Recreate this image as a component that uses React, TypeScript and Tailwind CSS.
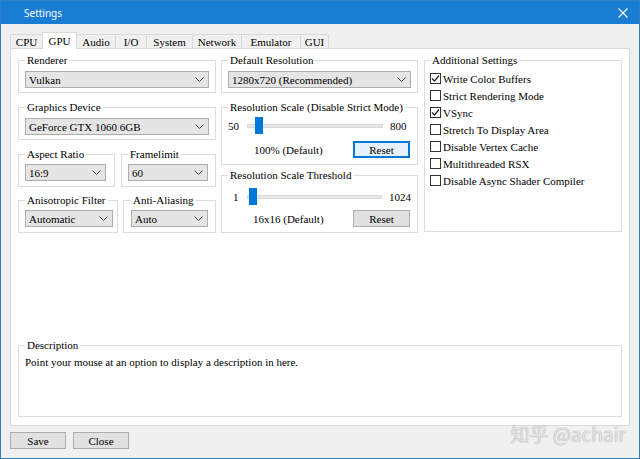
import React from "react";

const FONT = "font-['Liberation_Serif',serif] text-[11px] leading-[12px] text-black";

function Chevron() {
  return (
    <svg width="9" height="5" viewBox="0 0 9 5">
      <path d="M0.5 0.5 L4.5 4.5 L8.5 0.5" fill="none" stroke="#444" strokeWidth="1" />
    </svg>
  );
}

function Combo({ value, className = "" }: { value: string; className?: string }) {
  return (
    <div
      className={`h-[17px] bg-[#e5e5e5] border border-[#acacac] flex items-center justify-between pl-[3px] pr-[4px] ${className}`}
    >
      <span className="whitespace-nowrap">{value}</span>
      <Chevron />
    </div>
  );
}

function Group({
  title,
  className = "",
  children,
}: {
  title: string;
  className?: string;
  children?: React.ReactNode;
}) {
  return (
    <fieldset className={`border border-[#dcdcdc] min-w-0 ${className}`}>
      <legend className="px-[2px] leading-[12px] whitespace-nowrap">{title}</legend>
      {children}
    </fieldset>
  );
}

function Check({ label, checked }: { label: string; checked?: boolean }) {
  return (
    <div className="h-[17px] flex items-center gap-[2px]">
      <div className="w-[11px] h-[11px] border border-[#333] bg-white flex items-center justify-center">
        {checked && (
          <svg width="9" height="9" viewBox="0 0 9 9">
            <path d="M1 4.5 L3.5 7 L8 1.5" fill="none" stroke="#222" strokeWidth="1.2" />
          </svg>
        )}
      </div>
      <span className="whitespace-nowrap">{label}</span>
    </div>
  );
}

function Slider({
  left,
  right,
  handle,
  leftPad,
}: {
  left: string;
  right: string;
  handle: number;
  leftPad: string;
}) {
  return (
    <div className="h-[17px] flex items-center">
      <span className={`w-[19px] ${leftPad}`}>{left}</span>
      <div className="relative w-[136px] h-[17px] flex items-center">
        <div className="w-full h-[4px] bg-[#e7e7e7] border border-[#dadada]" />
        <div
          className="absolute top-0 w-[8px] h-[17px] bg-[#0078d7]"
          style={{ left: handle }}
        />
      </div>
      <span className="ml-[7px]">{right}</span>
    </div>
  );
}

function Btn({ label, focused, className = "" }: { label: string; focused?: boolean; className?: string }) {
  return (
    <div
      className={`h-[17px] flex items-center justify-center ${
        focused ? "bg-[#e5f1fb] border-2 border-[#0078d7]" : "bg-[#e1e1e1] border border-[#adadad]"
      } ${className}`}
    >
      {label}
    </div>
  );
}

const tabs: { t: string; w: string }[] = [
  { t: "CPU", w: "w-[33px]" },
  { t: "GPU", w: "w-[35px]" },
  { t: "Audio", w: "w-[40px]" },
  { t: "I/O", w: "w-[32px]" },
  { t: "System", w: "w-[47px]" },
  { t: "Network", w: "w-[50px]" },
  { t: "Emulator", w: "w-[60px]" },
  { t: "GUI", w: "w-[29px]" },
];

export default function App() {
  return (
    <div className={`w-[640px] h-[459px] bg-[#f0f0f0] flex flex-col border border-[#2d82c4] relative ${FONT}`}>
      {/* Title bar */}
      <div className="h-[23px] bg-[#1a7dd4] flex items-center justify-between pl-[23px] pr-[11px] shrink-0">
        <span className="font-['Segoe_UI','Noto_Sans',sans-serif] text-[10px] text-white">Settings</span>
        <svg width="10" height="10" viewBox="0 0 10 10">
          <path d="M0.5 0.5 L9.5 9.5 M9.5 0.5 L0.5 9.5" stroke="white" strokeWidth="1.1" />
        </svg>
      </div>

      <div className="flex-1 flex flex-col pl-[9px] pr-[9px] pt-[8px]">
        {/* Tabs */}
        <div className="flex items-end h-[16px]">
          {tabs.map(({ t, w }) => {
            const sel = t === "GPU";
            return (
              <div
                key={t}
                className={
                  sel
                    ? `${w} h-[17px] -mb-px -ml-px z-10 bg-white border border-[#d9d9d9] border-b-0 flex items-center justify-center`
                    : `${w} h-[14px] bg-[#f0f0f0] border border-[#d9d9d9] border-b-0 -ml-px first:ml-0 flex items-center justify-center`
                }
              >
                {t}
              </div>
            );
          })}
        </div>

        {/* Tab pane */}
        <div className="h-[378px] bg-white border border-[#d9d9d9] flex flex-col pl-[7px] pr-[7px] pt-[5px] pb-[8px]">
          <div className="flex">
            {/* Left column */}
            <div className="w-[198px] flex flex-col">
              <Group title="Renderer" className="px-[6px] pb-[4px]">
                <Combo value="Vulkan" className="mt-[5px]" />
              </Group>
              <Group title="Graphics Device" className="px-[6px] pb-[4px] mt-[8px]">
                <Combo value="GeForce GTX 1060 6GB" className="mt-[5px]" />
              </Group>
              <div className="flex mt-[8px]">
                <Group title="Aspect Ratio" className="w-[97px] pl-[6px] pr-[8px] pb-[5px]">
                  <Combo value="16:9" className="mt-[4px]" />
                </Group>
                <Group title="Framelimit" className="w-[95px] ml-[6px] pl-[6px] pr-[7px] pb-[5px]">
                  <Combo value="60" className="mt-[4px]" />
                </Group>
              </div>
              <div className="flex mt-[7px]">
                <Group title="Anisotropic Filter" className="w-[100px] pl-[6px] pr-[4px] pb-[5px]">
                  <Combo value="Automatic" className="mt-[4px]" />
                </Group>
                <Group title="Anti-Aliasing" className="w-[93px] ml-[5px] pl-[7px] pr-[7px] pb-[5px]">
                  <Combo value="Auto" className="mt-[4px]" />
                </Group>
              </div>
            </div>

            {/* Middle column */}
            <div className="w-[197px] ml-[5px] flex flex-col">
              <Group title="Default Resolution" className="px-[6px] pb-[4px]">
                <Combo value="1280x720 (Recommended)" className="mt-[5px]" />
              </Group>
              <Group title="Resolution Scale (Disable Strict Mode)" className="px-[6px] pb-[6px] mt-[8px]">
                <div className="mt-[4px]">
                  <Slider left="50" right="800" handle={8} leftPad="" />
                </div>
                <div className="mt-[7px] flex items-center h-[17px]">
                  <span className="pl-[26px]">100% (Default)</span>
                  <Btn label="Reset" focused className="ml-auto w-[57px] mr-[1px]" />
                </div>
              </Group>
              <Group title="Resolution Scale Threshold" className="px-[6px] pb-[5px] mt-[4px]">
                <div className="mt-[7px]">
                  <Slider left="1" right="1024" handle={2} leftPad="pl-[5px]" />
                </div>
                <div className="mt-[5px] flex items-center h-[17px]">
                  <span className="pl-[25px]">16x16 (Default)</span>
                  <Btn label="Reset" className="ml-auto w-[57px] mr-[1px]" />
                </div>
              </Group>
            </div>

            {/* Right column */}
            <div className="w-[198px] ml-[6px] flex flex-col">
              <Group title="Additional Settings" className="h-[178px] px-[5px]">
                <div className="mt-[4px] flex flex-col">
                  <Check label="Write Color Buffers" checked />
                  <Check label="Strict Rendering Mode" />
                  <Check label="VSync" checked />
                  <Check label="Stretch To Display Area" />
                  <Check label="Disable Vertex Cache" />
                  <Check label="Multithreaded RSX" />
                  <Check label="Disable Async Shader Compiler" />
                </div>
              </Group>
            </div>
          </div>

          <div className="flex-1" />

          <div className="w-[604px]">
            <Group title="Description" className="h-[78px] w-full px-[6px]">
              <div className="mt-[5px]">Point your mouse at an option to display a description in here.</div>
            </Group>
          </div>
        </div>

        {/* Bottom buttons */}
        <div className="flex gap-[7px] pt-[6px]">
          <Btn label="Save" className="w-[56px]" />
          <Btn label="Close" className="w-[56px]" />
        </div>
      </div>

      <div className="absolute right-[13px] bottom-[13px] font-['Noto_Sans_CJK_SC',sans-serif] text-[19px] leading-[22px] text-[#e4e4e4] [text-shadow:0_0_1px_#8a8a8a]">
        知乎 @achair
      </div>
    </div>
  );
}
